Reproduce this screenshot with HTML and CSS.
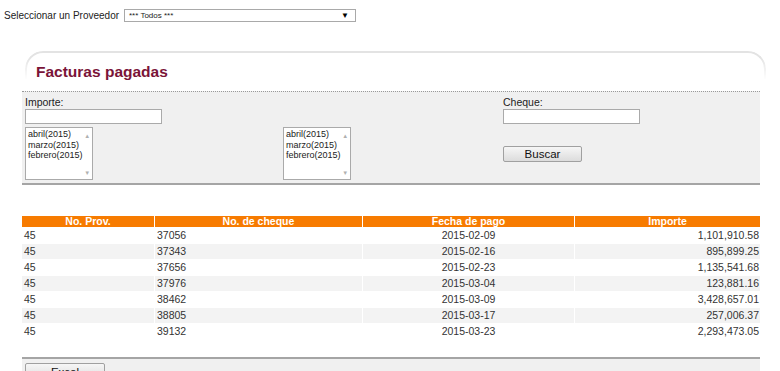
FILE: index.html
```html
<!DOCTYPE html>
<html lang="es">
<head>
  <meta charset="UTF-8" />
  <title>Facturas pagadas</title>
  <link rel="stylesheet" href="styles.css">
</head>
<body>

  <div class="supplier-bar">
    <label for="proveedor">Seleccionar un Proveedor</label>
    <div class="fake-select" id="proveedor">
      <span>*** Todos ***</span>
      <span class="arrow">&#9660;</span>
    </div>
  </div>

  <div class="card">
    <h1 class="card-title">Facturas pagadas</h1>

    <div class="filters">
      <div class="field">
        <label>Importe:</label>
        <input type="text" class="text-input" />
      </div>
      <div></div>
      <div class="field">
        <label>Cheque:</label>
        <input type="text" class="text-input" />
      </div>

      <div class="listbox">
        <ul>
          <li>abril(2015)</li>
          <li>marzo(2015)</li>
          <li>febrero(2015)</li>
        </ul>
        <div class="scroll"><span>&#9650;</span><span>&#9660;</span></div>
      </div>
      <div class="listbox">
        <ul>
          <li>abril(2015)</li>
          <li>marzo(2015)</li>
          <li>febrero(2015)</li>
        </ul>
        <div class="scroll"><span>&#9650;</span><span>&#9660;</span></div>
      </div>
      <div class="search-cell">
        <button class="btn">Buscar</button>
      </div>
    </div>

    <table class="results">
      <thead>
        <tr>
          <th class="c1">No. Prov.</th>
          <th class="c2">No. de cheque</th>
          <th class="c3">Fecha de pago</th>
          <th class="c4">Importe</th>
        </tr>
      </thead>
      <tbody>
        <tr><td>45</td><td>37056</td><td class="center">2015-02-09</td><td class="right">1,101,910.58</td></tr>
        <tr><td>45</td><td>37343</td><td class="center">2015-02-16</td><td class="right">895,899.25</td></tr>
        <tr><td>45</td><td>37656</td><td class="center">2015-02-23</td><td class="right">1,135,541.68</td></tr>
        <tr><td>45</td><td>37976</td><td class="center">2015-03-04</td><td class="right">123,881.16</td></tr>
        <tr><td>45</td><td>38462</td><td class="center">2015-03-09</td><td class="right">3,428,657.01</td></tr>
        <tr><td>45</td><td>38805</td><td class="center">2015-03-17</td><td class="right">257,006.37</td></tr>
        <tr><td>45</td><td>39132</td><td class="center">2015-03-23</td><td class="right">2,293,473.05</td></tr>
      </tbody>
    </table>

    <div class="footer">
      <button class="btn btn-excel">Excel</button>
    </div>
  </div>

</body>
</html>
```

FILE: styles.css
```css
* {
  box-sizing: border-box;
  margin: 0;
  padding: 0;
}

body {
  font-family: 'Liberation Sans', Arial, sans-serif;
  font-size: 11px;
  color: #333;
  background: #fff;
}

/* proveedor */
.supplier-bar {
  display: flex;
  align-items: center;
  padding: 8px 4px 0;
  height: 22px;
}

.supplier-bar label {
  color: #222;
  font-size: 10px;
  white-space: nowrap;
  flex-shrink: 0;
  width: 120px;
}

.fake-select {
  width: 232px;
  height: 13px;
  border: 1px solid #a9a9a9;
  display: flex;
  justify-content: space-between;
  align-items: center;
  padding: 0 6px 0 4px;
  font-size: 8px;
  color: #222;
}

.fake-select .arrow {
  font-size: 8px;
  color: #000;
}

/* tarjeta */
.card {
  position: relative;
  margin: 29px 20px 0 22px;
}

.card::before {
  content: '';
  position: absolute;
  top: 0;
  left: 3px;
  right: -6px;
  height: 30px;
  border: 2px solid #e3e3e3;
  border-bottom: none;
  border-radius: 18px 18px 0 0;
  -webkit-mask-image: linear-gradient(#000 20%, transparent 90%);
  mask-image: linear-gradient(#000 20%, transparent 90%);
}

.card-title {
  font-size: 15.5px;
  font-weight: bold;
  color: #7a1438;
  padding: 13px 0 11px 14px;
  line-height: 16px;
}

/* filtros */
.filters {
  display: grid;
  grid-template-columns: 258px 220px 1fr;
  grid-template-rows: 30px 57px;
  border-top: 1px dotted #999;
  border-bottom: 2px solid #a5a5a5;
  background: #f0f0f0;
  padding: 5px 0 0 3px;
  height: 94px;
}

.field label {
  display: block;
  color: #222;
  font-size: 10.5px;
  line-height: 11px;
  margin-bottom: 1px;
}

.text-input {
  width: 137px;
  height: 15px;
  border: 1px solid #aaa;
  background: #fff;
}

.listbox {
  width: 68px;
  height: 53px;
  border: 1px solid #aaa;
  background: #fff;
  display: flex;
}

.listbox ul {
  list-style: none;
  flex: 1;
  font-size: 9px;
  line-height: 10.5px;
  padding: 1px 0 0 2px;
  color: #222;
  white-space: nowrap;
}

.listbox .scroll {
  width: 13px;
  display: flex;
  flex-direction: column;
  justify-content: space-between;
  align-items: center;
  font-size: 6px;
  color: #b0b0b0;
  padding: 5px 0 3px;
}

.search-cell {
  padding-top: 19px;
}

.btn {
  font-family: 'Liberation Sans', Arial, sans-serif;
  font-size: 11.5px;
  color: #111;
  width: 79px;
  height: 16px;
  border: 1px solid #a0a0a0;
  border-radius: 2px;
  background: linear-gradient(#f6f6f6, #dcdcdc);
  line-height: 13px;
}

/* tabla */
.results {
  width: calc(100% + 2px);
  margin: 30px -1px 0;
  border-spacing: 1px;
  font-size: 10.5px;
}

.results th {
  background: #f77b00;
  color: #fff;
  font-weight: bold;
  height: 11px;
  line-height: 11px;
  padding: 0;
}

.results .c1 { width: 132px; }
.results .c2 { width: 207px; }
.results .c3 { width: 211px; }

.results td {
  height: 15px;
  padding: 0 2px;
  line-height: 15px;
  color: #333;
}

.results tbody tr:nth-child(even) td {
  background: #f3f3f3;
}

.results .center { text-align: center; }
.results .right { text-align: right; padding-right: 1px; }

/* pie */
.footer {
  margin-top: 17px;
  border-top: 2px solid #a5a5a5;
  background: #f0f0f0;
  padding: 4px 3px;
  height: 40px;
}

.btn-excel {
  width: 80px;
  height: 18px;
}
```
